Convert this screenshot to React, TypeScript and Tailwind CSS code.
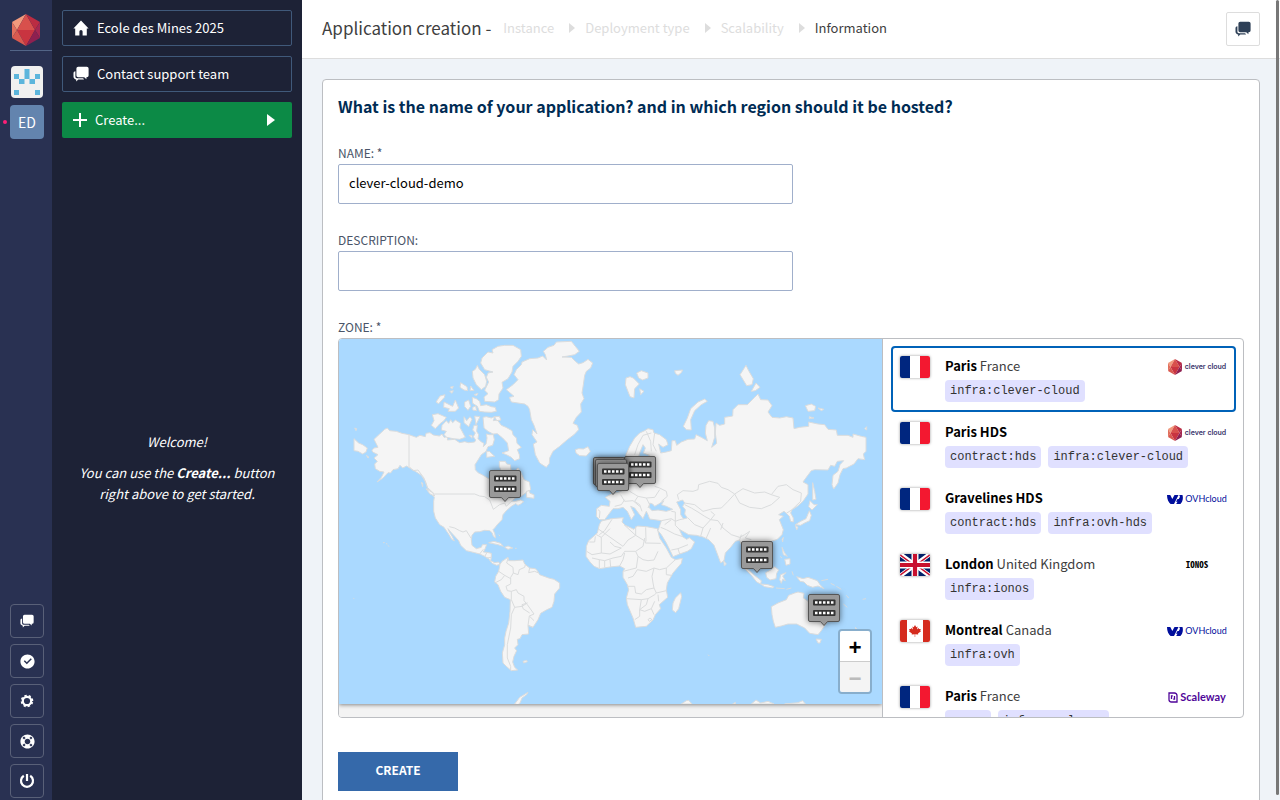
import { useState } from "react";
import type { ReactNode } from "react";
import { RiCheckboxCircleFill, RiLifebuoyFill } from "react-icons/ri";

type Zone = {
  id: string;
  city: string;
  country?: string;
  flag: "fr" | "gb" | "ca";
  provider: "clever" | "ovh" | "ionos" | "scaleway";
  tags: string[];
};

const ZONES: Zone[] = [
  { id: "par", city: "Paris", country: "France", flag: "fr", provider: "clever", tags: ["infra:clever-cloud"] },
  { id: "parhds", city: "Paris HDS", flag: "fr", provider: "clever", tags: ["contract:hds", "infra:clever-cloud"] },
  { id: "grahds", city: "Gravelines HDS", flag: "fr", provider: "ovh", tags: ["contract:hds", "infra:ovh-hds"] },
  { id: "ldn", city: "London", country: "United Kingdom", flag: "gb", provider: "ionos", tags: ["infra:ionos"] },
  { id: "mtl", city: "Montreal", country: "Canada", flag: "ca", provider: "ovh", tags: ["infra:ovh"] },
  { id: "scw", city: "Paris", country: "France", flag: "fr", provider: "scaleway", tags: ["green", "infra:scaleway"] },
];

// top-left corner of each pin, on a 543x365 map
const PINS = [
  { name: "Montreal", x: 150, y: 131 },
  { name: "Warsaw", x: 285, y: 117 },
  { name: "London", x: 254, y: 118 },
  { name: "Roubaix", x: 256, y: 120 },
  { name: "Paris", x: 258, y: 124 },
  { name: "Singapore", x: 402, y: 202 },
  { name: "Sydney", x: 469, y: 255 },
];

const LAND = [
  // north america
  "M148 270L155 278L175 280L192 286L213 290L235 298L246 292L262 296L264 286L276 284L286 291L304 294L312 288L318 298L330 296L328 306L350 304L365 314L380 311L392 314L410 312L413 306L406 296L412 285L404 276L408 262L418 262L416 280L422 290L420 302L430 312L438 316L436 326L444 318L447 300L445 288L455 290L466 290L469 305L464 322L450 326L444 340L430 350L420 366L411 380L412 395L420 404L432 410L455 424L470 440L500 420L490 400L484 385L484 370L502 370L506 378L517 380L519 396L530 400L540 390L548 402L558 425L574 432L578 455L565 463L550 474L532 480L520 490L532 490L548 486L557 491L548 498L540 502L533 497L520 505L505 518L495 530L492 545L478 560L470 570L465 575L470 586L473 600L466 595L462 584L455 578L440 577L425 581L410 582L402 592L400 605L402 622L415 632L430 628L433 620L446 620L441 633L436 642L447 643L460 646L460 658L458 668L470 674L482 672L486 679L476 682L462 676L452 662L438 654L425 648L410 644L385 638L368 622L362 608L350 595L338 582L330 572L334 582L342 594L349 609L341 604L333 590L326 580L318 568L305 560L292 540L287 520L287 490L289 478L275 462L268 448L262 430L250 412L235 402L215 390L206 384L194 390L186 382L180 392L165 395L158 405L150 404L135 420L117 432L130 418L138 402L125 400L112 392L110 378L118 370L108 360L120 350L104 342L102 337L108 330L120 328L112 312L108 304L125 288L140 274Z",
  // arctic islands
  "M500 22L525 22L548 35L550 55L540 70L525 85L522 102L510 122L492 133L495 150L483 168L482 185L470 192L440 190L438 177L450 167L440 157L452 132L445 118L450 105L465 102L440 95L428 75L432 60L450 42L465 45L462 35L480 25Z",
  "M418 82L424 94L440 110L446 130L443 145L430 155L415 140L405 120L403 100L412 94Z",
  "M403 178L415 182L425 190L428 203L445 200L460 206L472 208L475 220L460 223L440 222L424 220L418 205L404 196Z",
  "M435 238L445 236L460 240L470 236L466 248L478 246L490 262L504 268L522 278L525 290L535 300L537 316L550 328L538 335L544 350L545 362L530 368L520 358L505 350L492 345L512 338L508 315L494 300L478 287L465 288L450 280L438 270Z",
  "M470 236L484 235L489 246L476 248Z",
  "M312 262L325 248L332 256L338 245L344 254L352 246L368 256L366 268L382 298L365 304L345 302L326 298L318 290L325 280L310 276Z",
  "M283 230L300 227L325 238L318 248L305 258L292 272L280 262L288 248Z",
  "M318 192L334 200L344 205L352 186L362 210L352 220L330 220L334 212L317 208Z",
  "M294 192L306 174L321 170L319 178L302 197Z",
  "M368 134L387 146L389 158L378 156L366 148Z",
  "M398 144L408 157L396 158Z",
  "M336 148L346 145L343 152Z M335 160L346 158L342 166Z",
  "M380 192L392 186L398 205L390 217L380 206Z",
  "M408 170L420 166L416 173Z M404 208L413 204L416 218L404 216Z",
  "M378 236L386 248L396 236L402 244L392 266L378 254Z M410 234L426 236L414 260Z",
  "M446 340L454 340L470 355L446 358Z M393 292L402 292L402 301Z",
  "M565 460L574 458L576 466L588 470L588 481L566 478Z",
  "M50 270L56 272L54 278Z M48 302L62 315L74 320L88 330L84 342L74 348L60 340L48 338Z",
  "M250 432L254 436L254 446Z M264 452L284 464L290 474L276 468Z M85 352L93 358L90 360Z",
  // hawaii, samoa
  "M135 614L140 614 M144 617L148 618 M150 622L153 626 M46 781L49 782",
  // greenland and iceland
  "M655 12L700 10L712 25L724 40L710 50L690 54L672 57L700 58L712 70L722 78L735 74L750 64L764 75L758 90L745 100L740 112L736 140L732 165L738 182L728 198L730 222L715 238L705 256L718 262L722 275L708 290L688 305L665 325L645 340L635 360L634 376L625 388L605 375L592 350L586 318L597 312L582 290L584 275L597 288L588 262L580 245L575 215L570 205L560 198L540 195L520 192L514 178L528 175L505 155L525 140L540 125L528 110L535 95L550 80L552 72L575 62L600 60L614 54L626 66L622 50L616 40L630 28L648 22Z",
  "M712 335L722 332L736 333L750 326L757 340L745 354L725 353L714 345Z",
  // caribbean
  "M452 614L468 610L488 616L496 625L480 620Z M500 628L510 624L524 630L510 634Z M531 631L536 631 M482 590L486 594",
  // south america
  "M486 679L492 670L510 658L512 668L530 668L555 666L560 678L575 690L592 692L598 698L605 710L632 720L648 724L665 735L665 750L650 768L648 790L642 808L625 816L608 826L600 845L585 868L570 862L572 888L552 890L546 902L538 904L540 920L530 930L536 938L528 955L524 972L530 988L539 996L520 998L506 986L495 975L493 945L500 920L500 900L504 880L512 855L516 820L517 785L500 778L488 760L480 740L470 732L473 715L482 700Z",
  "M555 970L566 967L568 971L557 975Z M530 1098L545 1078L570 1063L566 1070L552 1080L546 1095L540 1100Z",
  // africa
  "M790 549L820 542L856 539L852 552L862 562L888 574L898 564L926 566L958 572L965 600L985 630L1000 658L1012 665L1033 661L1030 676L1005 705L988 735L985 755L989 778L964 800L968 812L952 830L945 846L925 865L893 868L885 840L868 800L865 780L872 755L868 740L855 718L855 700L860 692L845 684L816 687L785 692L768 685L756 672L744 655L745 625L752 608L778 585L784 560Z",
  "M1028 764L1031 776L1022 812L1013 824L1003 816L1005 795L1012 780Z",
  // eurasia
  "M864 350L875 325L890 300L905 285L920 278L930 272L945 275L948 285L965 290L985 305L990 320L975 328L962 318L968 345L985 342L1000 338L1002 308L1012 308L1016 322L1030 312L1050 304L1070 303L1074 290L1090 298L1108 308L1102 285L1104 262L1112 248L1125 250L1130 270L1130 298L1121 328L1136 316L1132 285L1134 255L1145 262L1160 258L1160 238L1184 234L1185 215L1200 200L1228 200L1242 186L1250 178L1260 168L1268 185L1290 186L1302 203L1290 222L1302 238L1325 240L1345 236L1365 240L1368 272L1385 268L1412 265L1412 252L1440 258L1460 260L1470 274L1495 276L1498 292L1530 292L1545 298L1545 288L1570 295L1584 298L1584 340L1576 348L1580 365L1560 362L1548 378L1525 390L1515 392L1506 410L1500 435L1487 453L1482 440L1485 412L1500 400L1506 380L1517 368L1498 370L1490 385L1478 382L1470 396L1430 395L1420 398L1405 418L1395 432L1410 440L1410 468L1395 490L1378 505L1362 515L1358 525L1366 540L1366 552L1358 550L1354 535L1345 526L1338 520L1322 530L1336 535L1324 545L1330 560L1336 575L1332 590L1318 604L1300 610L1290 640L1270 650L1250 690L1235 680L1222 650L1210 620L1205 606L1192 610L1178 628L1162 645L1158 668L1148 675L1138 648L1128 622L1112 605L1095 597L1075 592L1052 590L1024 574L1034 596L1046 604L1054 599L1070 612L1060 632L1048 640L1025 648L1005 656L1000 645L985 615L970 590L960 578L966 560L970 548L935 543L930 530L925 520L915 542L905 530L890 510L878 505L890 530L880 545L868 520L855 508L840 512L825 512L815 525L800 545L785 545L775 535L776 512L790 502L814 505L816 490L802 478L820 468L850 460L870 440L880 400L864 380Z",
  "M1036 265L1048 240L1058 212L1080 192L1100 183L1108 190L1090 200L1070 218L1058 245L1060 276L1045 275Z",
  "M864 120L876 116L886 120L904 138L890 152L888 180L876 176L862 140Z M896 105L910 98L930 105L930 120L914 126L902 120Z M905 152L918 160L908 170Z",
  "M1010 98L1034 96L1030 104L1020 112L1012 106Z",
  "M1224 82L1232 98L1246 122L1242 140L1226 143L1206 110Z M1254 135L1266 148L1252 158L1240 160Z",
  "M1402 203L1420 198L1433 205L1430 218L1410 220Z M1440 210L1458 214L1450 218Z M1414 236L1428 240L1414 242Z",
  "M1580 272L1586 266L1586 276Z",
  // japan and pacific
  "M1424 434L1430 460L1434 484L1424 486Z M1416 488L1428 500L1438 500L1422 516L1412 506Z M1414 518L1420 532L1415 548L1398 556L1388 562L1372 560L1388 550L1404 542Z M1372 562L1380 568L1376 576Z",
  "M1332 628L1340 645L1348 655L1336 650Z M1340 664L1356 662L1356 678L1344 682Z M1326 655L1332 660 M1332 604L1336 598L1334 612Z",
  "M1218 690L1232 696L1252 714L1270 728L1268 738L1256 732L1240 712Z M1268 738L1290 740L1308 746L1304 750L1280 746Z",
  "M1283 704L1300 695L1310 686L1322 696L1316 706L1314 722L1296 726L1286 718Z",
  "M1328 710L1344 704L1334 714L1342 728L1334 724L1330 736L1325 725Z M1362 700L1366 712 M1314 750L1340 752 M1345 754L1360 750",
  "M1376 716L1395 722L1410 718L1438 728L1446 740L1458 752L1440 744L1424 748L1408 742L1398 732L1386 730Z",
  "M1450 728L1470 724 M1478 736L1490 742 M1495 745L1510 754 M1525 772L1532 780 M1516 798L1528 808 M1574 784L1584 782",
  "M1300 806L1320 795L1345 785L1352 772L1370 765L1380 762L1398 766L1396 780L1410 790L1430 800L1450 790L1500 845L1468 850L1450 878L1440 890L1415 886L1400 870L1376 858L1350 858L1330 864L1312 868L1306 850L1302 830Z",
  "M1434 903L1450 904L1446 915L1440 915Z M1552 868L1562 880L1556 882Z M1110 950L1114 954",
  "M1157 668L1165 678L1159 684Z",
  // antarctic tips
  "M1030 1098L1045 1088L1052 1087L1062 1098Z M1240 1098L1254 1086L1268 1095L1290 1090L1308 1098Z M1340 1098L1380 1094L1394 1088L1402 1098Z M1184 1098L1192 1093L1192 1098Z",
];

const WATER = [
  "M935 495L944 498L950 505L962 498L978 488L970 500L985 505L1004 514L985 520L960 516L942 518L933 508Z",
  "M1016 492L1034 486L1040 495L1034 505L1042 515L1040 528L1048 540L1036 542L1028 530L1028 515Z",
  "M905 345L915 320L922 330L916 345L935 352L912 365L900 400L890 400Z",
];

const BORDERS = [
  "M213 290L213 385L225 398L240 396L258 420L268 448L289 468L410 468L425 474L440 476L455 486L466 514L485 500L500 495L505 505L520 490",
  "M334 566L350 570L365 578L375 582L385 578L400 602 M425 648L436 634 M447 643L440 656 M460 658L445 660",
  "M510 660L506 675L525 688L526 705L518 718L518 738 M482 700L500 712L518 722 M470 735L490 725L500 712 M526 705L540 710L544 695L560 688L562 680 M575 690L572 704L590 700L600 704",
  "M518 738L504 745L508 758L520 760L535 755L540 765L558 775L558 788L568 800L588 828L574 834L570 862L585 868 M520 760L520 785L530 808L552 805L568 795L552 800L555 812L575 825 M530 808L520 830L518 870L508 920L508 960L518 985L518 996 M574 834L588 848",
  "M775 590L790 598L816 572 M790 598L790 645L762 650L746 640 M784 590L800 578L822 544 M781 573L855 625L870 606L893 592L858 560 M790 645L816 648L850 630 M816 612L830 625L850 630 M754 612L770 612L772 595",
  "M893 565L893 592L922 610L922 615L968 616 M920 600L915 625L893 640L900 655L915 665L930 668L948 666L960 640 M923 568L924 610",
  "M784 665L784 690 M800 668L800 688 M816 665L818 687 M762 660L784 665L800 668L825 660L850 655L860 640L893 640 M845 684L855 665L860 645",
  "M856 700L875 695L895 690L900 655 M870 720L885 715L898 695L925 700L948 690L965 695L985 690L1012 665 M985 690L985 710L1000 712 M868 745L890 745L893 765L910 768L925 755L948 750L955 765L985 758 M948 690L942 715L945 735L948 750",
  "M866 782L910 785L930 782L950 770L955 765 M910 785L905 815L905 835L890 845 M930 782L925 800L905 815L920 820L940 812L950 790 M940 812L948 830 M930 845L936 840L942 845L934 850Z M960 770L962 790",
  "M1018 470L1035 458L1065 460L1080 455L1082 440L1115 430L1140 436L1150 448L1170 455L1190 468L1170 490L1150 510L1125 512L1095 520L1070 500L1040 495 M1018 470L1022 485",
  "M1190 468L1215 452L1250 465L1280 462L1300 470L1325 478L1300 500L1270 512L1235 508L1205 495L1190 468 M1300 470L1320 445L1345 440L1365 455L1390 465L1388 490L1362 515L1345 526",
  "M1040 500L1060 510L1080 522L1100 535L1118 545L1095 570L1070 560L1050 540 M1118 545L1130 530L1118 520 M1118 545L1140 548L1155 570L1180 590L1205 598L1220 590L1235 580 M1155 555L1148 575 M1095 570L1088 595 M1118 570L1105 600 M1205 606L1210 590 M1235 580L1222 600L1240 605",
  "M890 350L900 320L915 292L940 285 M925 280L938 310L940 340 M950 285L945 320L955 340 M950 445L965 450L985 460L988 475L970 490 M875 460L900 475L925 480L950 478L965 455 M925 480L935 500L930 510 M848 470L860 490L885 488L905 505 M900 475L890 490L905 500L912 520 M830 505L850 500L860 485",
  "M970 548L1000 542L1012 550L1012 562L1024 574 M980 560L1000 545 M968 568L985 575L1010 588L1034 596 M1000 520L1012 522L1012 550L1025 545L1040 542 M1025 648L1020 632L1050 620 M1000 636L1020 632 M780 515L786 520L784 540",
];

function Bubbles({ className = "" }: { className?: string }) {
  return (
    <svg viewBox="0 0 16 16" fill="currentColor" className={className} aria-hidden="true">
      <path d="M5.200 .8h8.600A1.800 1.800 0 0 1 15.600 2.600v6.800a1.800 1.800 0 0 1-1.800 1.800h-.4v2l-2.200-2H5.200a1.800 1.800 0 0 1-1.800-1.800V2.600A1.800 1.800 0 0 1 5.200.8z" />
      <path d="M2.400 5.200v5.400c0 .9.600 1.600 1.500 1.600h6.200l1 1.200H5.300l-2.100 2v-2C1.700 13.200.5 12.200.5 10.700V7c0-.9.800-1.700 1.900-1.800z" />
    </svg>
  );
}

function Home() {
  return (
    <svg viewBox="0 0 16 16" fill="currentColor" className="size-4" aria-hidden="true">
      <path d="M8 .5L.4 8.500h1.800v7h4.200V11.500a1.600 1.600 0 0 1 3.200 0v4h4.200v-7h1.800z" />
    </svg>
  );
}

function Gear() {
  return (
    <svg viewBox="0 0 16 16" className="size-4" aria-hidden="true" fill="none" stroke="currentColor">
      <circle cx="8" cy="8" r="4.200" strokeWidth="2.200" />
      <circle cx="8" cy="8" r="5.500" strokeWidth="1.600" strokeDasharray="2.300 2.020" transform="rotate(11 8 8)" />
    </svg>
  );
}

function Power() {
  return (
    <svg viewBox="0 0 16 16" className="size-4" aria-hidden="true" fill="none" stroke="currentColor" strokeWidth="2.200">
      <path d="M8 1v7M4.800 2.800a6 6 0 1 0 6.400 0" />
    </svg>
  );
}

function Gem({ className = "" }: { className?: string }) {
  return (
    <svg viewBox="0 0 28 32" className={className} aria-hidden="true">
      <path fill="#f19a7d" d="M14 0L0 8l5 8z" />
      <path fill="#d8504c" d="M14 0L5 16h18z" />
      <path fill="#bb2c42" d="M14 0l14 8-5 8z" />
      <path fill="#e2705d" d="M0 8v16l5-8z" />
      <path fill="#a52750" d="M28 8v16l-5-8z" />
      <path fill="#c93440" d="M5 16h18l-9 16z" />
      <path fill="#d9594f" d="M0 24l14 8-9-16z" />
      <path fill="#8e2050" d="M28 24l-14 8 9-16z" />
    </svg>
  );
}

function Identicon() {
  return (
    <svg viewBox="0 0 32 32" className="size-8 rounded-sm bg-[#f0f0f0]" aria-hidden="true">
      <path
        fill="#5cb5dc"
        d="M13.500 3h5v10h-5zM3 8h5v5H3zM24 8h5v5h-5zM8 13h5.500v5H8zM18.500 13H24v5h-5.500zM3 24h5v5H3zM24 24h5v5h-5z"
      />
    </svg>
  );
}

function Flag({ code }: { code: Zone["flag"] }) {
  return (
    <svg viewBox="0 0 30 22" className="h-[22px] w-[30px] rounded-xs shadow-[0_0_3px_rgba(0,0,0,0.4)]" aria-hidden="true">
      <path fill="#fff" d="M0 0h30v22H0z" />
      {code === "fr" && (
        <>
          <path fill="#00267f" d="M0 0h10v22H0z" />
          <path fill="#f31830" d="M20 0h10v22H20z" />
        </>
      )}
      {code === "ca" && (
        <>
          <path fill="#d52b1e" d="M0 0h7v22H0zM23 0h7v22h-7z" />
          <path
            fill="#d52b1e"
            d="M15 5l1.300 2.200 1.300-.6-.6 3 1.600-1.500.5 1 1.700-.2-.6 1.700.8.600-3 2.400.2 1-3-.4V17h-.5v-2.800l-3 .4.200-1-3-2.400.8-.6-.6-1.700 1.700.2.500-1L13 9.600l-.6-3 1.300.6z"
          />
        </>
      )}
      {code === "gb" && (
        <>
          <path fill="#012169" d="M0 0h30v22H0z" />
          <path stroke="#fff" strokeWidth="4.400" d="M0 0l30 22M30 0L0 22" />
          <path stroke="#c8102e" strokeWidth="1.500" d="M0 .8l15 11M15 10.200l15 11M30 .8L15 11.800M0 21.200l15-11" />
          <path stroke="#fff" strokeWidth="7" d="M15 0v22M0 11h30" />
          <path stroke="#c8102e" strokeWidth="4.200" d="M15 0v22M0 11h30" />
        </>
      )}
    </svg>
  );
}

function Provider({ name }: { name: Zone["provider"] }) {
  if (name === "clever") {
    return (
      <span className="flex items-center gap-[3px] font-['Inter'] text-[7px] font-semibold text-[#39346b]">
        <Gem className="h-4 w-3.5" />
        clever cloud
      </span>
    );
  }
  if (name === "ovh") {
    return (
      <span className="flex items-center gap-0.5 font-['Lato'] text-[9px] text-[#000e9c]">
        <svg viewBox="0 0 16 9" className="h-[9px] w-4" fill="currentColor" aria-hidden="true">
          <path d="M0 0h3.300l2 4L7.500 0h4L7 9H3.600C1.500 7 0 4.500 0 0zM12.200 0H15.500C16.500 3.500 15.500 7 13.400 9H9.200L10.500 6.700H9L10.500 4H11.800L13 1.800z" />
        </svg>
        OVHcloud
      </span>
    );
  }
  if (name === "ionos") {
    return <span className="font-['Noto_Sans_Mono_CJK_JP','Roboto'] text-[9px] font-bold text-black">IONOS</span>;
  }
  return (
    <span className="flex items-center gap-0.5 font-['Lato'] text-[11px] font-bold text-[#4f0599]">
      <svg viewBox="0 0 10 11" className="h-[11px] w-2.5" fill="none" stroke="currentColor" strokeWidth="1.300" aria-hidden="true">
        <path d="M1 1h5.500A2.500 2.500 0 0 1 9 3.500V10H3.500A2.500 2.500 0 0 1 1 7.500zM3.500 7V3.800h1.300M6.500 4v3.200H5.200" />
      </svg>
      Scaleway
    </span>
  );
}

function RailButton({ label, children }: { label: string; children: ReactNode }) {
  return (
    <button
      type="button"
      aria-label={label}
      className="flex size-[34px] items-center justify-center rounded border border-[#596078] text-white"
    >
      {children}
    </button>
  );
}

function Pin({ name, x, y }: { name: string; x: number; y: number }) {
  return (
    <button
      type="button"
      aria-label={name}
      className="absolute drop-shadow-[0_0_3px_rgba(0,0,0,0.55)]"
      style={{ left: `${(x / 543) * 100}%`, top: `${(y / 365) * 100}%` }}
    >
      <svg viewBox="0 0 32 32" className="size-8" aria-hidden="true">
        <path
          fill="#999"
          stroke="#555"
          d="M2 .5h28A1.500 1.500 0 0 1 31.500 2v24a1.500 1.500 0 0 1-1.500 1.500H19.500L16 31.500l-3.500-4H2A1.500 1.500 0 0 1 .5 26V2A1.500 1.500 0 0 1 2 .5z"
        />
        <rect x="5" y="5.500" width="22.500" height="6" rx="1" fill="#333" />
        <rect x="5" y="16" width="22.500" height="6" rx="1" fill="#333" />
        <path
          fill="#fff"
          d="M7 7.200h2.500v2.500H7zM11 7.200h2.500v2.500H11zM15 7.200h2.500v2.500H15zM19 7.200h2.500v2.500H19zM23 7.200h2.500v2.500H23zM7 17.800h2.500v2.500H7zM11 17.800h2.500v2.500H11zM15 17.800h2.500v2.500H15zM19 17.800h2.500v2.500H19zM23 17.800h2.500v2.500H23z"
        />
      </svg>
    </button>
  );
}

function ZoneMap() {
  return (
    <div className="flex-1 overflow-hidden bg-[#f3f3f3]">
      <div className="relative shadow-[0_1px_4px_rgba(0,0,0,0.45)]">
        <svg viewBox="3 3 1629 1095" className="block w-full bg-[#aad9ff]" strokeWidth="3" strokeLinejoin="round" aria-hidden="true">
          <g fill="#f5f5f5" stroke="#dadcdd">
            {LAND.map((d) => (
              <path key={d} d={d} />
            ))}
          </g>
          <g fill="#aad9ff" stroke="#dadcdd">
            {WATER.map((d) => (
              <path key={d} d={d} />
            ))}
          </g>
          <g fill="none" stroke="#dadcdd">
            {BORDERS.map((d) => (
              <path key={d} d={d} />
            ))}
          </g>
        </svg>
        {PINS.map((pin) => (
          <Pin key={pin.name} {...pin} />
        ))}
        <div className="absolute right-2.5 bottom-2.5 flex flex-col rounded border-2 border-[#88aecc] font-['Liberation_Mono'] text-[22px] leading-[22px] font-bold">
          <button type="button" aria-label="Zoom in" className="h-[31px] w-[30px] rounded-t-xs border-b border-[#ccc] bg-white pt-2 text-black">
            +
          </button>
          <button type="button" aria-label="Zoom out" disabled className="h-[30px] w-[30px] rounded-b-xs bg-[#f4f4f4] pt-2 text-[#bbb]">
            −
          </button>
        </div>
      </div>
    </div>
  );
}

export default function App() {
  const [name, setName] = useState("clever-cloud-demo");
  const [description, setDescription] = useState("");
  const [selected, setSelected] = useState("par");

  return (
    <div className="flex h-screen overflow-hidden bg-[#eff3f8] font-['Noto_Sans_CJK_JP',sans-serif] text-[13px] text-[#404040]">
      <nav className="flex w-[52px] shrink-0 flex-col bg-[#293152] pb-0.5">
        <a href="#home" aria-label="Home" className="ml-2.5 flex h-[51px] items-end border-b border-[#536587] pb-1">
          <Gem className="ml-0.5 h-8 w-7" />
        </a>
        <div className="mt-[15px] flex flex-col gap-[7px] pl-2.5">
          <a href="#me" aria-label="Personal space" className="ml-px block size-8">
            <Identicon />
          </a>
          <a
            href="#org"
            className="relative flex size-[34px] items-center justify-center rounded bg-[#6384ae] text-sm text-white"
          >
            ED
            <span className="absolute -left-[7px] size-1 rounded-full bg-[#ff1f78]" />
          </a>
        </div>
        <div className="mt-auto flex flex-col gap-1.5 pl-2.5">
          <RailButton label="Support">
            <Bubbles className="size-3.5" />
          </RailButton>
          <RailButton label="Status">
            <RiCheckboxCircleFill className="size-[17px]" />
          </RailButton>
          <RailButton label="Settings">
            <Gear />
          </RailButton>
          <RailButton label="Help">
            <RiLifebuoyFill className="size-[17px]" />
          </RailButton>
          <RailButton label="Log out">
            <Power />
          </RailButton>
        </div>
      </nav>

      <aside className="flex w-[250px] shrink-0 flex-col bg-[#1d2236] p-2.5 text-white">
        <div className="flex flex-col gap-2.5">
          <a href="#org" className="flex h-9 items-center gap-2 rounded-xs border border-[#40597a] px-2.5">
            <Home />
            Ecole des Mines 2025
          </a>
          <button type="button" className="flex h-9 items-center gap-2 rounded-xs border border-[#40597a] px-2.5">
            <Bubbles className="size-4" />
            Contact support team
          </button>
          <button type="button" className="flex h-9 items-center gap-2 rounded-xs bg-[#0c8a46] px-[11px]">
            <svg viewBox="0 0 14 14" className="size-3.5" stroke="currentColor" strokeWidth="2" aria-hidden="true">
              <path d="M7 0v14M0 7h14" />
            </svg>
            Create...
            <svg viewBox="0 0 8 12" className="mr-1.5 ml-auto h-3 w-2" fill="currentColor" aria-hidden="true">
              <path d="M0 0l8 6-8 6z" />
            </svg>
          </button>
        </div>
        <div className="flex flex-1 flex-col items-center justify-center gap-2.5 pt-1.5 text-center leading-[21px] italic">
          <p>Welcome!</p>
          <p>
            You can use the <b>Create...</b> button
            <br />
            right above to get started.
          </p>
        </div>
      </aside>

      <main className="relative flex min-w-0 flex-1 flex-col">
        <header className="flex h-[59px] shrink-0 items-center border-b border-[#ddd] bg-white px-5">
          <h1 className="pb-0.5 text-[17px] leading-6">Application creation -</h1>
          <ol className="ml-3 flex items-center gap-2.5 pb-0.5 text-[#ddd]">
            {["Instance", "Deployment type", "Scalability"].map((step) => (
              <li key={step} className="flex items-center gap-[15px]">
                {step}
                <svg viewBox="0 0 6 10" className="h-2.5 w-1.5" fill="currentColor" aria-hidden="true">
                  <path d="M0 0l6 5-6 5z" />
                </svg>
              </li>
            ))}
            <li className="text-[#404040]">Information</li>
          </ol>
          <button
            type="button"
            aria-label="Open support chat"
            className="ml-auto flex size-[34px] items-center justify-center rounded-xs border border-[#ddd] text-[#2e4057]"
          >
            <Bubbles className="size-4" />
          </button>
        </header>

        <form
          className="m-5 shrink-0 rounded border border-[#bcbec2] bg-white p-[15px]"
          onSubmit={(e) => e.preventDefault()}
        >
          <h2 className="pb-0.5 text-base leading-[22px] font-bold text-[#002c54]">
            What is the name of your application? and in which region should it be hosted?
          </h2>

          <div className="mt-6 flex w-[455px] flex-col">
            <label htmlFor="name" className="pb-0.5 text-xs leading-[19px] text-[#4a5568]">
              NAME: *
            </label>
            <input
              id="name"
              value={name}
              onChange={(e) => setName(e.target.value)}
              className="h-10 rounded-xs border border-[#a0afcb] px-2.5 pb-1 text-black"
            />
          </div>

          <div className="mt-[26px] flex w-[455px] flex-col">
            <label htmlFor="description" className="pb-0.5 text-xs leading-[19px] text-[#4a5568]">
              DESCRIPTION:
            </label>
            <input
              id="description"
              value={description}
              onChange={(e) => setDescription(e.target.value)}
              className="h-10 rounded-xs border border-[#a0afcb] px-2.5 pb-1 text-black"
            />
          </div>

          <p className="mt-[26px] pb-0.5 text-xs leading-[19px] text-[#4a5568]">ZONE: *</p>
          <div className="flex h-[380px] overflow-hidden rounded border border-[#bcbec2]">
            <ZoneMap />
            <ul className="w-[361px] overflow-y-auto border-l border-[#bcbec2] py-[7px] pr-[7px] pl-2 [scrollbar-width:none]">
              {ZONES.map((zone) => (
                <li key={zone.id}>
                  <button
                    type="button"
                    aria-pressed={selected === zone.id}
                    onClick={() => setSelected(zone.id)}
                    className={`flex h-[66px] w-full items-start gap-[15px] rounded border-2 px-[7px] pt-1.5 text-left ${
                      selected === zone.id ? "border-[#0062b8]" : "border-transparent"
                    }`}
                  >
                    <span className="mt-0.5 shrink-0">
                      <Flag code={zone.flag} />
                    </span>
                    <span className="min-w-0 flex-1">
                      <span className="block leading-6">
                        <b className="text-black">{zone.city}</b> {zone.country}
                      </span>
                      <span className="mt-0.5 flex gap-[7px] font-['Liberation_Mono',monospace] text-xs leading-[22px] whitespace-nowrap text-[#333]">
                        {zone.tags.map((tag) => (
                          <span key={tag} className="rounded bg-[#e0e0ff] px-[5px]">
                            {tag}
                          </span>
                        ))}
                      </span>
                    </span>
                    <span className="-ml-[60px] flex h-[26px] w-[60px] shrink-0 items-center justify-center whitespace-nowrap">
                      <Provider name={zone.provider} />
                    </span>
                  </button>
                </li>
              ))}
            </ul>
          </div>

          <button type="submit" className="mt-[34px] h-[39px] w-[120px] bg-[#3569aa] pb-[3px] text-xs font-bold text-white">
            CREATE
          </button>
        </form>

        <div className="absolute top-0 right-px h-[795px] w-[3px] rounded-full bg-[#777]" />
      </main>
    </div>
  );
}
